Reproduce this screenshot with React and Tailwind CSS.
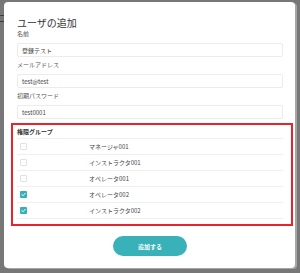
import React from "react";

const rows = [
  { name: "マネージャ001", checked: false },
  { name: "インストラクタ001", checked: false },
  { name: "オペレータ001", checked: false },
  { name: "オペレータ002", checked: true },
  { name: "インストラクタ002", checked: true },
];

function Check({ checked }) {
  if (checked) {
    return (
      <div className="w-[7px] h-[7px] rounded-[1px] bg-[#36b1b9] flex items-center justify-center">
        <svg width="5" height="5" viewBox="0 0 10 10">
          <path d="M1.5 5.2 L4 7.5 L8.5 2.5" fill="none" stroke="#fff" strokeWidth="1.8" strokeLinecap="round" strokeLinejoin="round" />
        </svg>
      </div>
    );
  }
  return <div className="w-[7px] h-[7px] rounded-[1px] border border-[#e2e2e2] bg-white" />;
}

export default function App() {
  const font = { fontFamily: '"Noto Sans CJK JP", "Noto Sans", sans-serif' };
  return (
    <div className="relative w-[300px] h-[273px] bg-[#777777] overflow-hidden pt-[2px] pl-[4px]" style={font}>
      <span className="absolute left-[-2px] top-[11px] text-[10px] leading-[14px] text-[#2e2e2e]">ユ</span>
      <div className="relative z-10 w-[291px] h-[266px] bg-white rounded-[4px] shadow-[2px_1px_0_0_rgba(255,255,255,0.35)] pt-[14px] pl-[13px] pr-[12px]">
        <div className="text-[10px] leading-[14px] text-[#333]">ユーザの追加</div>
        <div className="text-[6px] leading-[8px] text-[#555]">名前</div>
        <div className="mt-[5px] h-[14px] border border-[#ececec] rounded-[2px] pl-[4px] flex items-center text-[6px] text-[#444]">登録テスト</div>
        <div className="mt-[4px] text-[6px] leading-[8px] text-[#555]">メールアドレス</div>
        <div className="mt-[5px] h-[14px] border border-[#ececec] rounded-[2px] pl-[4px] flex items-center text-[6px] text-[#444]">test@test</div>
        <div className="mt-[4px] text-[6px] leading-[8px] text-[#555]">初期パスワード</div>
        <div className="mt-[5px] h-[14px] border border-[#ececec] rounded-[2px] pl-[4px] flex items-center text-[6px] text-[#444]">test0001</div>
        <div className="mt-[4px] ml-[-6px] mr-[-10px] h-[103px] border-2 border-[#e8232b] pl-[4px] pr-[8px]">
          <div className="h-[14px] border-b border-[#efefef] flex items-center text-[6px] font-bold text-[#333]">権限グループ</div>
          {rows.map((r) => (
            <div key={r.name} className="h-[16px] border-b border-[#efefef] flex items-center">
              <div className="w-[72px] pl-[3px]">
                <Check checked={r.checked} />
              </div>
              <div className="text-[6px] text-[#444]">{r.name}</div>
            </div>
          ))}
        </div>
        <div className="mt-[10px] flex justify-center">
          <div className="w-[74px] h-[20px] rounded-full bg-[#38b1b9] flex items-center justify-center text-[6px] font-bold text-white">追加する</div>
        </div>
      </div>
    </div>
  );
}
